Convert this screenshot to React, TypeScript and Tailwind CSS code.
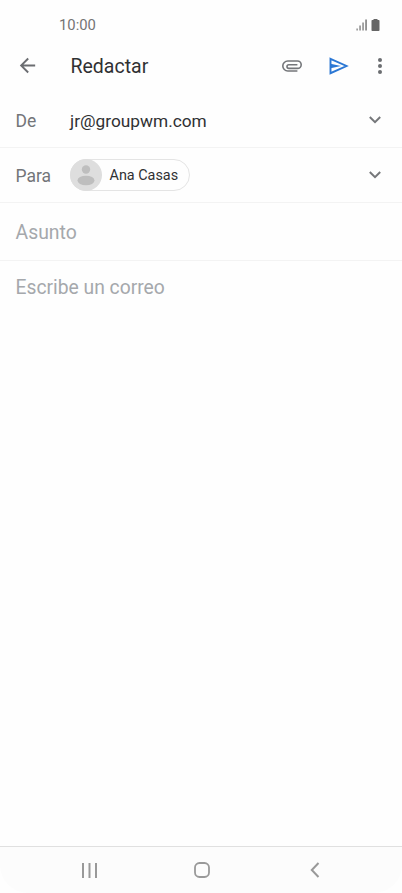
import type { ReactNode } from "react";

interface FieldRowProps {
  label: string;
  className: string;
  children: ReactNode;
}

function ChevronDown() {
  return (
    <svg width="12" height="8" viewBox="0 0 12 8" fill="none" stroke="#75777a" strokeWidth="2">
      <path d="M0.8 1L6 6.2L11.2 1" />
    </svg>
  );
}

function StatusBar() {
  return (
    <div className="flex h-[40px] items-center justify-between pt-[10px] pr-[22px] pl-[59px]">
      <span className="text-[14.8px] text-[#747474]">10:00</span>
      <div className="flex items-center gap-[4px]">
        <svg width="11" height="12" viewBox="0 0 11 12" fill="#777777">
          <rect x="0.5" y="9.5" width="1.2" height="2" />
          <rect x="3.4" y="6.5" width="1.3" height="5" />
          <rect x="6.4" y="3.5" width="1.3" height="8" />
          <rect x="9.3" y="0.5" width="1.5" height="11" />
        </svg>
        <svg width="9" height="12" viewBox="0 0 9 12" fill="#666666">
          <path d="M2.5 0h4v1h1.2a.8.8 0 0 1 .8.8V11.2a.8.8 0 0 1-.8.8H1.3a.8.8 0 0 1-.8-.8V1.8a.8.8 0 0 1 .8-.8h1.200z" />
        </svg>
      </div>
    </div>
  );
}

function Toolbar() {
  return (
    <header className="flex h-[51px] items-center pl-[16px]">
      <button aria-label="Atrás">
        <svg width="23" height="23" viewBox="0 0 24 24" fill="#6b6d71">
          <path d="M20 11H7.83l5.59-5.59L12 4l-8 8 8 8 1.41-1.41L7.83 13H20v-2z" />
        </svg>
      </button>
      <h1 className="ml-[31.5px] flex-1 pt-[2px] text-[19.5px] text-[#303133]">Redactar</h1>
      <button aria-label="Adjuntar" className="mr-[27px]">
        <svg width="20" height="12" viewBox="0 0 20 12" fill="none" stroke="#74767a" strokeWidth="1.6">
          <path d="M15.4 11H5.8a5 5 0 0 1 0-10h9.7a3.700 3.700 0 0 1 0 7.400H6.8a1.700 1.700 0 0 1 0-3.600h8.600" />
        </svg>
      </button>
      <button aria-label="Enviar" className="mr-[29px]">
        <svg width="20" height="18" viewBox="0 0 20 18" fill="none" stroke="#2b77d4" strokeWidth="1.9">
          <path d="M1.5 1.8L17.5 9L1.5 16.2z" />
          <path d="M1.5 6.800L12 9L1.5 11.200z" fill="#2b77d4" stroke="none" />
        </svg>
      </button>
      <button aria-label="Más opciones" className="mr-[20px]">
        <svg width="4" height="16" viewBox="0 0 4 16" fill="#6b6d71">
          <circle cx="2" cy="2" r="2" />
          <circle cx="2" cy="8" r="2" />
          <circle cx="2" cy="14" r="2" />
        </svg>
      </button>
    </header>
  );
}

function FieldRow({ label, className, children }: FieldRowProps) {
  return (
    <div className={`flex items-center border-b border-[#f3f3f3] pr-[21px] pl-[15.5px] ${className}`}>
      <span className="w-[54.5px] pt-[2px] text-[17.5px] text-[#737579]">{label}</span>
      <div className="flex-1">{children}</div>
      <ChevronDown />
    </div>
  );
}

function ContactChip({ name }: { name: string }) {
  return (
    <div className="flex h-[32px] w-[119.5px] items-center rounded-full border border-[#e4e4e4]">
      <svg className="-ml-px shrink-0" width="32" height="32" viewBox="0 0 32 32">
        <circle cx="16" cy="16" r="16" fill="#dedede" />
        <circle cx="16" cy="10.5" r="4.2" fill="#bebebe" />
        <ellipse cx="16" cy="21.500" rx="8.5" ry="4.8" fill="#bebebe" />
      </svg>
      <span className="ml-[7.5px] pt-[1px] text-[14.4px] whitespace-nowrap text-[#303133]">{name}</span>
    </div>
  );
}

function NavigationBar() {
  return (
    <nav className="flex h-[47px] items-center rounded-b-[28px] border-t border-[#e0e0e0] bg-[#fcfcfc] pl-[82px]">
      <svg width="15" height="15" viewBox="0 0 15 15" fill="#999999">
        <rect x="0" y="0" width="2" height="15" />
        <rect x="6.5" y="0" width="2" height="15" />
        <rect x="13" y="0" width="2" height="15" />
      </svg>
      <svg className="ml-[97px]" width="16" height="16" viewBox="0 0 16 16" fill="none" stroke="#999999" strokeWidth="1.8">
        <rect x="1" y="1" width="14" height="14" rx="4.5" />
      </svg>
      <svg className="ml-[99.5px]" width="10" height="16" viewBox="0 0 10 16" fill="none" stroke="#999999" strokeWidth="2">
        <path d="M8.5 1L1.8 8L8.5 15" />
      </svg>
    </nav>
  );
}

export default function App() {
  return (
    <div className="flex h-[893px] w-[402px] flex-col overflow-hidden bg-[#fefefe] font-['Roboto',sans-serif]">
      <StatusBar />
      <Toolbar />
      <main className="flex flex-1 flex-col">
        <FieldRow label="De" className="h-[57px] pt-[2px]">
          <p className="pt-[3px] text-[17.3px] text-[#303133]">jr@groupwm.com</p>
        </FieldRow>
        <FieldRow label="Para" className="h-[55px]">
          <ContactChip name="Ana Casas" />
        </FieldRow>
        <div className="flex h-[58px] items-center border-b border-[#f3f3f3] px-[15.5px] pt-[3px] text-[19.4px] text-[#a5a8ac]">
          Asunto
        </div>
        <div className="flex h-[53px] items-center px-[15.5px] pt-[2px] text-[19.3px] text-[#a5a8ac]">
          Escribe un correo
        </div>
      </main>
      <NavigationBar />
    </div>
  );
}
